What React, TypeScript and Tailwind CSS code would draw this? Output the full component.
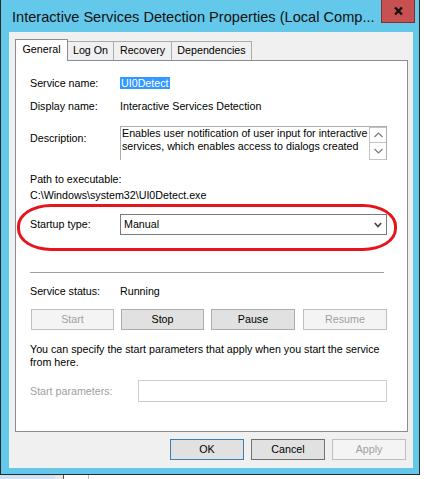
const BTN = 'flex h-[21px] items-center justify-center border text-[10.7px] leading-[13px]'

function Label({ children, muted }: { children: React.ReactNode; muted?: boolean }) {
  return (
    <div className={`w-[90px] shrink-0 leading-[13px] ${muted ? 'text-[#a0a0a0]' : 'text-black'}`}>
      {children}
    </div>
  )
}

function Chevron({ dir }: { dir: 'up' | 'down' }) {
  return (
    <svg width="9" height="6" viewBox="0 0 9 6" className="block">
      <polyline
        points={dir === 'up' ? '0.5,5 4.5,1 8.5,5' : '0.5,1 4.5,5 8.5,1'}
        fill="none"
        stroke="#7a7a7a"
        strokeWidth="1.2"
      />
    </svg>
  )
}

export default function App() {
  return (
    <div className="relative h-[479px] w-[424px] overflow-hidden bg-white font-['Liberation_Sans',Arial,sans-serif] text-[10.7px] text-black">
      <div className="flex h-[475px] w-[420px] flex-col border-x border-b border-[#2a2a2a] bg-[#63c8ea]">
        {/* title bar */}
        <div className="flex h-[32px] shrink-0 items-start justify-between pl-[11px] pr-[4px]">
          <div className="mt-[7px] whitespace-nowrap text-[14.6px] leading-[20px] text-[#111]">
            Interactive Services Detection Properties (Local Comp...
          </div>
          <div className="flex h-[23px] w-[34px] items-center justify-center border border-[#7d3030] border-t-0 bg-[#c75050]">
            <svg width="9" height="8" viewBox="0 0 9 8">
              <path d="M1 0.5 L8 7.5 M8 0.5 L1 7.5" stroke="#111" strokeWidth="2.3" />
            </svg>
          </div>
        </div>

        {/* client area */}
        <div className="ml-[8px] flex h-[436px] w-[404px] flex-col bg-[#f0f0f0] pl-[6px] pr-[6px] pt-[7px]">
          {/* tabs */}
          <div className="flex items-end">
            <div className="relative z-10 -mb-px h-[22px] w-[53px] border border-b-0 border-[#898c95] bg-white pt-[3px] text-center leading-[13px]">
              General
            </div>
            <div className="h-[19px] w-[46px] border-r border-t border-[#acacac] bg-[#f0f0f0] pt-[2px] text-center leading-[13px]">
              Log On
            </div>
            <div className="h-[19px] w-[58px] border-r border-t border-[#acacac] bg-[#f0f0f0] pt-[2px] text-center leading-[13px]">
              Recovery
            </div>
            <div className="h-[19px] w-[80px] border-r border-t border-[#acacac] bg-[#f0f0f0] pt-[2px] text-center leading-[13px]">
              Dependencies
            </div>
          </div>

          {/* panel */}
          <div className="relative h-[372px] w-[393px] border border-[#898c95] bg-white pl-[14px] pt-[16px]">
            <div className="flex h-[13px]">
              <Label>Service name:</Label>
              <span className="h-[12px] bg-[#3399ff] px-px leading-[12px] text-white">UI0Detect</span>
            </div>

            <div className="mt-[10px] flex h-[13px]">
              <Label>Display name:</Label>
              <span className="leading-[13px]">Interactive Services Detection</span>
            </div>

            <div className="mt-[13px] flex h-[34px]">
              <div className="pt-[6px]">
                <Label>Description:</Label>
              </div>
              <div className="flex h-[34px] w-[267px] border-x border-t border-[#abadb3]">
                <div className="flex-1 overflow-hidden whitespace-nowrap pl-px leading-[13px]">
                  Enables user notification of user input for interactive
                  <br />
                  services, which enables access to dialogs created
                </div>
                <div className="flex w-[17px] flex-col">
                  <div className="flex h-[16px] items-center justify-center border border-[#c3c3c3] border-r-0">
                    <Chevron dir="up" />
                  </div>
                  <div className="flex h-[17px] items-center justify-center border border-[#c3c3c3] border-r-0 border-t-0">
                    <Chevron dir="down" />
                  </div>
                </div>
              </div>
            </div>

            <div className="mt-[13px] h-[13px] leading-[13px]">Path to executable:</div>
            <div className="mt-[3px] h-[13px] leading-[13px]">C:\Windows\system32\UI0Detect.exe</div>

            <div className="mt-[12px] flex h-[21px] items-center">
              <Label>Startup type:</Label>
              <div className="flex h-[21px] w-[267px] items-center justify-between border border-[#7a7a7a] bg-white pl-[3px] pr-[4px]">
                <span className="leading-[13px]">Manual</span>
                <svg width="8" height="6" viewBox="0 0 8 6">
                  <polyline points="0.8,1 4,4.5 7.2,1" fill="none" stroke="#444" strokeWidth="1.6" />
                </svg>
              </div>
            </div>

            <div className="mt-[37px] h-px w-[354px] bg-[#a0a0a0]" />

            <div className="mt-[12px] flex h-[13px]">
              <Label>Service status:</Label>
              <span className="leading-[13px]">Running</span>
            </div>

            <div className="ml-px mt-[11px] flex gap-[7px]">
              <div className={`${BTN} w-[83px] border-[#bfbfbf] bg-[#f4f4f4] text-[#a0a0a0]`}>Start</div>
              <div className={`${BTN} w-[83px] border-[#adadad] bg-[#e1e1e1]`}>Stop</div>
              <div className={`${BTN} w-[84px] border-[#adadad] bg-[#e1e1e1]`}>Pause</div>
              <div className={`${BTN} ml-px w-[84px] border-[#bfbfbf] bg-[#f4f4f4] text-[#a0a0a0]`}>Resume</div>
            </div>

            <p className="mt-[13px] whitespace-nowrap leading-[13px]">
              You can specify the start parameters that apply when you start the service
              <br />
              from here.
            </p>

            <div className="mt-[11px] flex h-[22px] items-center">
              <div className="w-[108px] leading-[13px] text-[#a0a0a0]">Start parameters:</div>
              <div className="h-[22px] w-[249px] border border-[#cccdcf] bg-white" />
            </div>

            {/* red annotation */}
            <div className="absolute left-px top-[143px] h-[47px] w-[380px] rounded-[34px/22px] border-[3px] border-[#e8141c]" />
          </div>

          {/* dialog buttons */}
          <div className="mt-[7px] flex justify-end gap-[7px] pr-px">
            <div className={`${BTN} w-[74px] border-[#3c7fb1] bg-[#e1e1e1]`}>OK</div>
            <div className={`${BTN} w-[74px] border-[#707070] bg-[#e1e1e1]`}>Cancel</div>
            <div className={`${BTN} w-[74px] border-[#bfbfbf] bg-[#f4f4f4] text-[#a0a0a0]`}>Apply</div>
          </div>
        </div>
      </div>

      {/* strip below the window */}
      <div className="flex h-[4px]">
        <div className="w-[55px] bg-[#cfe3f4]" />
        <div className="w-[8px] bg-[#e8e8e8]" />
        <div className="w-px bg-[#555]" />
        <div className="w-[24px] bg-white" />
        <div className="w-px bg-[#bbb]" />
      </div>
    </div>
  )
}
